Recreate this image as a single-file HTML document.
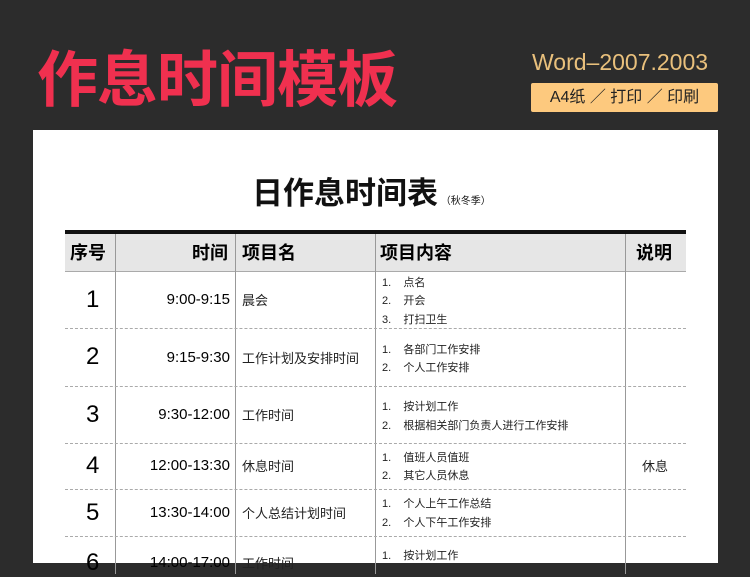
<html><head><style>
body{margin:0;width:750px;height:563px;background:#2c2c2c;overflow:hidden;position:relative;font-family:"Liberation Sans","Noto Sans CJK SC",sans-serif}
.a{position:absolute;white-space:nowrap}
.cell{position:absolute;font-size:13px;color:#222}
.li{position:absolute;font-size:11px;color:#222}
</style></head><body>
<div class="a" style="left:37px;top:40px;font-size:61px;font-weight:bold;color:#f0304f;letter-spacing:-1px;line-height:80px">作息时间模板</div>
<div class="a" style="left:532px;top:45px;font-size:23px;color:#e9c07c;line-height:34px">Word–2007.2003</div>
<div class="a" style="left:531px;top:83px;width:187px;height:29px;background:#fdc97e;border-radius:2px;font-size:16px;line-height:29px;text-align:center;color:#222">A4纸 ／ 打印 ／ 印刷</div>
<div class="a" style="left:33px;top:130px;width:685px;height:433px;background:#fff"></div>
<div class="a" style="left:252px;top:172px;font-size:31px;font-weight:bold;color:#111;line-height:44px">日作息时间表<span style="font-size:10px;font-weight:normal"> （秋冬季）</span></div>
<div class="a" style="left:65px;top:230px;width:621px;height:4px;background:#111"></div>
<div class="a" style="left:65px;top:234px;width:621px;height:37px;background:#e6e6e6;border-bottom:1px solid #aaa"></div>
<div class="a" style="left:115px;top:234px;width:1px;height:340px;background:#999"></div>
<div class="a" style="left:235px;top:234px;width:1px;height:340px;background:#999"></div>
<div class="a" style="left:375px;top:234px;width:1px;height:340px;background:#999"></div>
<div class="a" style="left:625px;top:234px;width:1px;height:340px;background:#999"></div>
<div class="a" style="left:65px;top:328px;width:621px;border-top:1px dashed #aaa"></div>
<div class="a" style="left:65px;top:386px;width:621px;border-top:1px dashed #aaa"></div>
<div class="a" style="left:65px;top:443px;width:621px;border-top:1px dashed #aaa"></div>
<div class="a" style="left:65px;top:489px;width:621px;border-top:1px dashed #aaa"></div>
<div class="a" style="left:65px;top:536px;width:621px;border-top:1px dashed #aaa"></div>
<div class="a" style="left:70px;top:241px;font-size:18px;font-weight:bold;line-height:24px">序号</div>
<div class="a" style="left:192px;top:241px;font-size:18px;font-weight:bold;line-height:24px">时间</div>
<div class="a" style="left:242px;top:241px;font-size:18px;font-weight:bold;line-height:24px">项目名</div>
<div class="a" style="left:380px;top:241px;font-size:18px;font-weight:bold;line-height:24px">项目内容</div>
<div class="a" style="left:636px;top:241px;font-size:18px;font-weight:bold;line-height:24px">说明</div>
<div class="a" style="left:86px;top:286px;font-size:24px">1</div>
<div class="a" style="left:86px;top:343px;font-size:24px">2</div>
<div class="a" style="left:86px;top:401px;font-size:24px">3</div>
<div class="a" style="left:86px;top:452px;font-size:24px">4</div>
<div class="a" style="left:86px;top:499px;font-size:24px">5</div>
<div class="a" style="left:86px;top:549px;font-size:24px">6</div>
<div class="a" style="right:520px;top:291px;font-size:15px">9:00-9:15</div>
<div class="a" style="right:520px;top:349px;font-size:15px">9:15-9:30</div>
<div class="a" style="right:520px;top:406px;font-size:15px">9:30-12:00</div>
<div class="a" style="right:520px;top:457px;font-size:15px">12:00-13:30</div>
<div class="a" style="right:520px;top:504px;font-size:15px">13:30-14:00</div>
<div class="a" style="right:520px;top:554px;font-size:15px">14:00-17:00</div>
<div class="a cell" style="left:242px;top:290px">晨会</div>
<div class="a cell" style="left:242px;top:348px">工作计划及安排时间</div>
<div class="a cell" style="left:242px;top:405px">工作时间</div>
<div class="a cell" style="left:242px;top:456px">休息时间</div>
<div class="a cell" style="left:242px;top:503px">个人总结计划时间</div>
<div class="a cell" style="left:242px;top:553px">工作时间</div>
<div class="a cell" style="left:642px;top:456px">休息</div>
<div class="li" style="left:382px;top:274px">1.&nbsp;&nbsp;&nbsp;&nbsp;点名</div>
<div class="li" style="left:382px;top:292px">2.&nbsp;&nbsp;&nbsp;&nbsp;开会</div>
<div class="li" style="left:382px;top:311px">3.&nbsp;&nbsp;&nbsp;&nbsp;打扫卫生</div>
<div class="li" style="left:382px;top:341px">1.&nbsp;&nbsp;&nbsp;&nbsp;各部门工作安排</div>
<div class="li" style="left:382px;top:359px">2.&nbsp;&nbsp;&nbsp;&nbsp;个人工作安排</div>
<div class="li" style="left:382px;top:398px">1.&nbsp;&nbsp;&nbsp;&nbsp;按计划工作</div>
<div class="li" style="left:382px;top:417px">2.&nbsp;&nbsp;&nbsp;&nbsp;根据相关部门负责人进行工作安排</div>
<div class="li" style="left:382px;top:449px">1.&nbsp;&nbsp;&nbsp;&nbsp;值班人员值班</div>
<div class="li" style="left:382px;top:467px">2.&nbsp;&nbsp;&nbsp;&nbsp;其它人员休息</div>
<div class="li" style="left:382px;top:495px">1.&nbsp;&nbsp;&nbsp;&nbsp;个人上午工作总结</div>
<div class="li" style="left:382px;top:514px">2.&nbsp;&nbsp;&nbsp;&nbsp;个人下午工作安排</div>
<div class="li" style="left:382px;top:547px">1.&nbsp;&nbsp;&nbsp;&nbsp;按计划工作</div>
</body></html>
